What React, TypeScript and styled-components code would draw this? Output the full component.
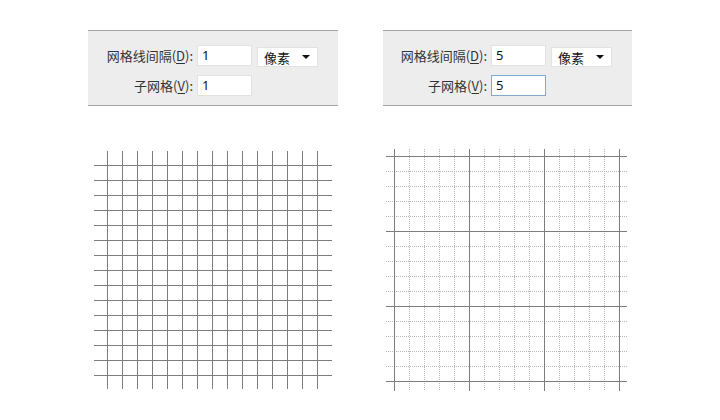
import React from "react";
import styled, { createGlobalStyle } from "styled-components";

const Global = createGlobalStyle`
  html, body { margin: 0; padding: 0; background: #fff; }
  body { width: 720px; height: 420px; overflow: hidden; }
`;

const Page = styled.div`
  display: flex;
  gap: 45px;
  padding: 30px 0 0 88px;
  font-family: "Noto Sans CJK SC", "Noto Sans", sans-serif;
`;

const Column = styled.div<{ $w: number }>`
  display: flex;
  flex-direction: column;
  width: ${(p) => p.$w}px;
`;

const Panel = styled.div<{ $labelW: number }>`
  box-sizing: border-box;
  height: 76px;
  background: #ededed;
  border-top: 1px solid #a3a3a3;
  border-bottom: 1px solid #a3a3a3;
  padding-top: 14px;
  display: grid;
  grid-template-columns: ${(p) => p.$labelW}px 55px 61px;
  grid-auto-rows: 21px;
  column-gap: 5px;
  row-gap: 9px;
  align-items: center;
`;

const Label = styled.label`
  justify-self: end;
  font-size: 13px;
  color: #333;
  white-space: nowrap;
  line-height: 21px;
  margin-right: -1px;
  & u { text-underline-offset: 2px; }
`;

const Field = styled.div<{ $focus?: boolean }>`
  box-sizing: border-box;
  height: 21px;
  background: #fff;
  border: 1px solid ${(p) => (p.$focus ? "#84a9cf" : "#e2e2e2")};
  font-family: "Noto Sans", "Liberation Sans", sans-serif;
  font-size: 13px;
  color: #111;
  padding-left: 4px;
  line-height: 19px;
`;

const Select = styled.div`
  box-sizing: border-box;
  height: 20px;
  margin-top: 3px;
  background: #fff;
  border: 1px solid #e2e2e2;
  font-size: 13px;
  color: #111;
  padding: 0 7px 0 6px;
  display: flex;
  align-items: center;
  justify-content: space-between;
`;

const Arrow = styled.span`
  width: 0;
  height: 0;
  border-left: 4px solid transparent;
  border-right: 4px solid transparent;
  border-top: 4px solid #111;
`;

const GridSvg = styled.svg`
  display: block;
  margin-top: 39px;
`;

type Props = { value: string; focus?: boolean; labelW: number };

const Controls: React.FC<Props> = ({ value, focus, labelW }) => (
  <Panel $labelW={labelW}>
    <Label>
      网格线间隔(<u>D</u>):
    </Label>
    <Field>{value}</Field>
    <Select>
      <span>像素</span>
      <Arrow />
    </Select>
    <Label>
      子网格(<u>V</u>):
    </Label>
    <Field $focus={focus}>{value}</Field>
  </Panel>
);

const range = (n: number) => Array.from({ length: n }, (_, i) => i);

const LeftGrid = () => {
  const ox = 88;
  const oy = 145;
  return (
    <GridSvg width={250} height={250}>
      <g stroke="#7d7d7d" strokeWidth={1} shapeRendering="crispEdges">
        {range(15).map((i) => {
          const x = 107 + 15 * i - ox + 0.5;
          return <line key={"v" + i} x1={x} x2={x} y1={151 - oy} y2={389 - oy} />;
        })}
        {range(15).map((j) => {
          const y = 165 + 15 * j - oy + 0.5;
          return <line key={"h" + j} x1={94 - ox} x2={332 - ox} y1={y} y2={y} />;
        })}
      </g>
    </GridSvg>
  );
};

const RightGrid = () => {
  const ox = 383;
  const oy = 145;
  const minors = range(16).filter((k) => k % 5 !== 0);
  const majors = [0, 5, 10, 15];
  return (
    <GridSvg width={249} height={250}>
      <g stroke="#b8b8b8" strokeWidth={1} strokeDasharray="1 1" shapeRendering="crispEdges">
        {minors.map((k) => {
          const x = 394 + 15 * k - ox + 0.5;
          return <line key={"mv" + k} x1={x} x2={x} y1={149 - oy} y2={391 - oy} />;
        })}
        {minors.map((k) => {
          const y = 156 + 15 * k - oy + 0.5;
          return <line key={"mh" + k} x1={386 - ox} x2={627 - ox} y1={y} y2={y} />;
        })}
      </g>
      <g stroke="#7d7d7d" strokeWidth={1} shapeRendering="crispEdges">
        {majors.map((k) => {
          const x = 394 + 15 * k - ox + 0.5;
          return <line key={"v" + k} x1={x} x2={x} y1={149 - oy} y2={391 - oy} />;
        })}
        {majors.map((k) => {
          const y = 156 + 15 * k - oy + 0.5;
          return <line key={"h" + k} x1={386 - ox} x2={627 - ox} y1={y} y2={y} />;
        })}
      </g>
    </GridSvg>
  );
};

export default function App() {
  return (
    <>
      <Global />
      <Page>
        <Column $w={250}>
          <Controls value="1" labelW={104} />
          <LeftGrid />
        </Column>
        <Column $w={249}>
          <Controls value="5" focus labelW={103} />
          <RightGrid />
        </Column>
      </Page>
    </>
  );
}
